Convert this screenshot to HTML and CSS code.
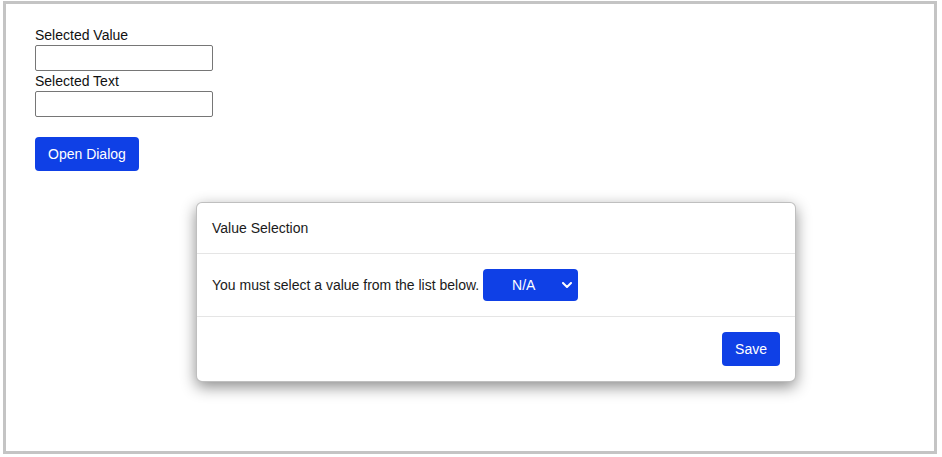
FILE: index.html
```html
<!DOCTYPE html>
<html lang="en">
<head>
    <meta charset="UTF-8">
    <meta name="viewport" content="width=device-width, initial-scale=1.0">
    <title>Value Selection</title>
    <link rel="stylesheet" href="styles.css">
</head>
<body>

    <div class="frame">
        <div class="fields">
            <label for="selectedValue">Selected Value</label>
            <input type="text" id="selectedValue">

            <label for="selectedText">Selected Text</label>
            <input type="text" id="selectedText">
        </div>

        <button type="button" class="btn">Open Dialog</button>

        <div class="dialog">
            <div class="dialog-header">Value Selection</div>
            <div class="dialog-body">
                <span>You must select a value from the list below.</span>
                <div class="select-wrap">
                    <select id="valueList">
                        <option value="">N/A</option>
                        <option value="1">Option 1</option>
                        <option value="2">Option 2</option>
                    </select>
                    <svg class="chevron" width="10" height="6" viewBox="0 0 10 6">
                        <path d="M1 1l4 4 4-4" fill="none" stroke="#fff" stroke-width="2" stroke-linecap="round" stroke-linejoin="round"/>
                    </svg>
                </div>
            </div>
            <div class="dialog-footer">
                <button type="button" class="btn">Save</button>
            </div>
        </div>
    </div>

</body>
</html>
```

FILE: styles.css
```css
body {
    font-family: Arial, "Liberation Sans", sans-serif;
    font-size: 14px;
    color: #111;
    margin: 0;
    background: #fff;
}
.frame {
    position: relative;
    box-sizing: border-box;
    width: 934px;
    height: 453px;
    margin: 1px 0 0 3px;
    padding: 23px 29px;
    border: 3px solid #c4c4c4;
}
.fields label {
    display: block;
    line-height: 16px;
    margin-bottom: 2px;
}
.fields input {
    display: block;
    box-sizing: border-box;
    width: 178px;
    height: 26px;
    margin: 0 0 2px;
    padding: 2px 4px;
    border: 1px solid #767676;
    border-radius: 2px;
    font: inherit;
}
.btn {
    display: inline-block;
    box-sizing: border-box;
    height: 34px;
    margin-top: 18px;
    padding: 0 13px;
    background-color: #0f40e6;
    color: #fff;
    border: none;
    border-radius: 4px;
    font-family: inherit;
    font-size: 14px;
    line-height: 34px;
    cursor: pointer;
}
.dialog {
    position: absolute;
    left: 190px;
    top: 198px;
    width: 600px;
    box-sizing: border-box;
    background: #fff;
    border: 1px solid rgba(0, 0, 0, 0.25);
    border-radius: 6px;
    box-shadow: 0 5px 15px rgba(0, 0, 0, 0.45);
    color: #1a1a1a;
}
.dialog-header {
    padding: 15px;
    line-height: 20px;
    border-bottom: 1px solid #e5e5e5;
}
.dialog-body {
    display: flex;
    align-items: center;
    gap: 4px;
    padding: 15px;
    border-bottom: 1px solid #e5e5e5;
}
.select-wrap {
    position: relative;
    width: 95px;
    height: 32px;
}
.select-wrap select {
    appearance: none;
    -webkit-appearance: none;
    width: 100%;
    height: 100%;
    padding: 0 22px 0 8px;
    background: #0f40e6;
    color: #fff;
    border: none;
    border-radius: 4px;
    font-family: inherit;
    font-size: 14px;
    text-align: center;
    text-align-last: center;
}
.chevron {
    position: absolute;
    right: 6px;
    top: 13px;
    pointer-events: none;
}
.dialog-footer {
    display: flex;
    justify-content: flex-end;
    padding: 15px;
}
.dialog-footer .btn {
    margin-top: 0;
}
```
